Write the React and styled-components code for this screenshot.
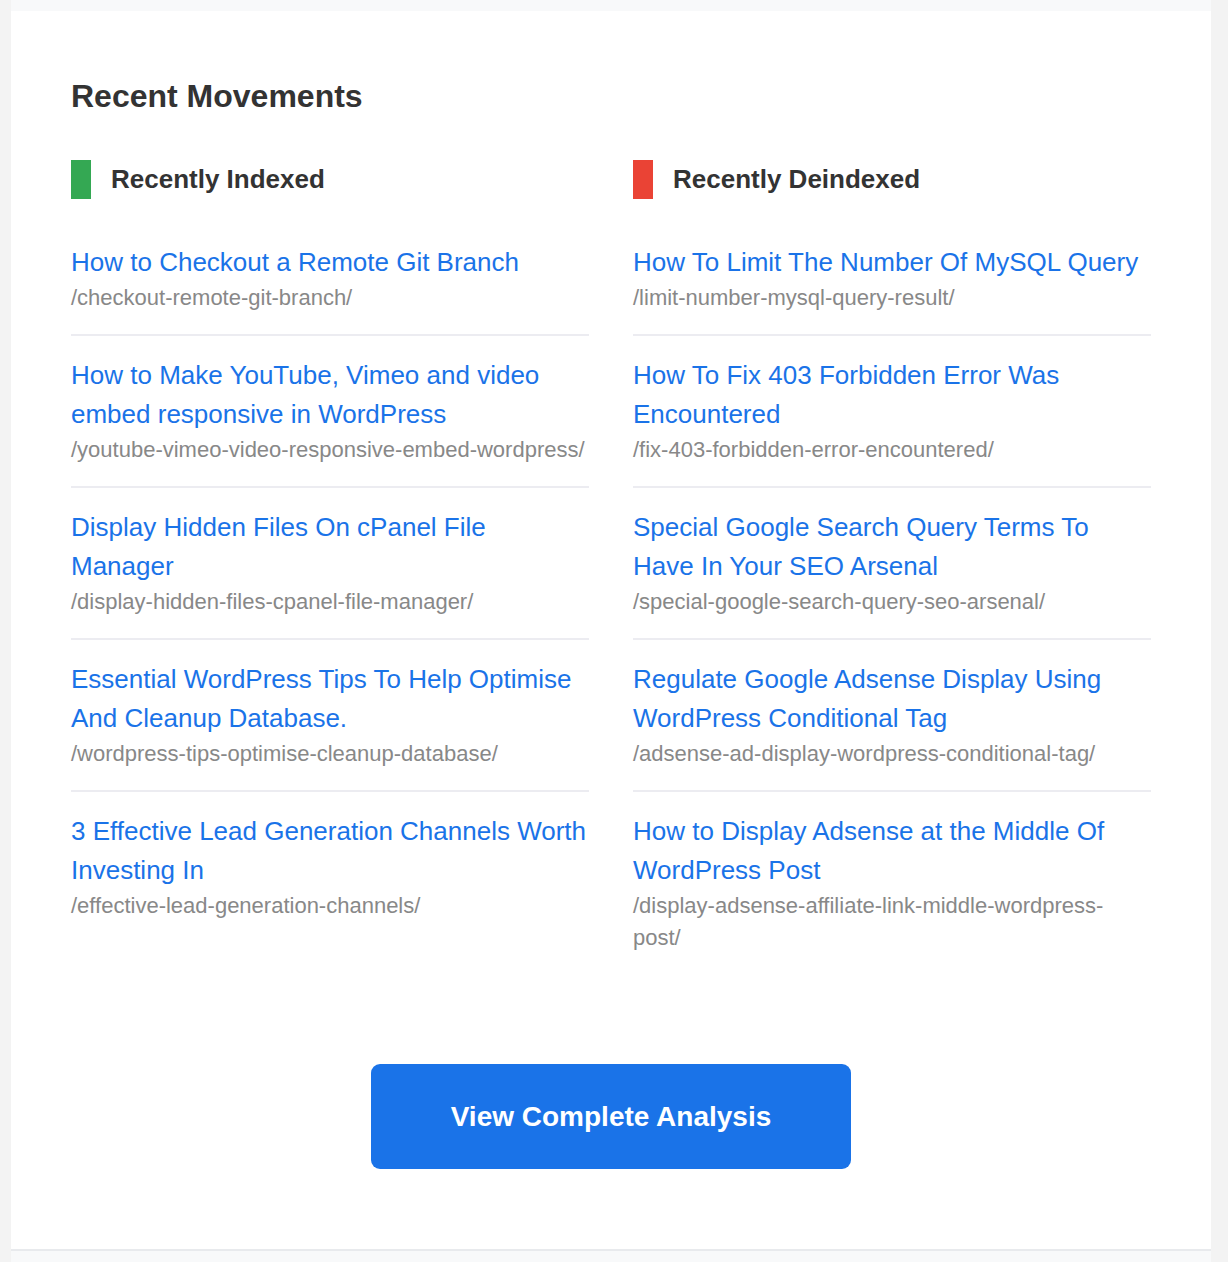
import React from "react";
import styled, { createGlobalStyle } from "styled-components";

const GlobalStyle = createGlobalStyle`
  html, body {
    margin: 0;
    padding: 0;
    background: #f3f3f3;
    font-family: "Liberation Sans", Arial, Helvetica, sans-serif;
  }
  * { box-sizing: border-box; }
`;

const Wrapper = styled.div`
  margin-left: 11px;
  width: 1200px;
  min-height: 100vh;
  background: #f8f9fa;
  padding-top: 11px;
`;

const Card = styled.section`
  background: #ffffff;
  border-bottom: 2px solid #e8eaed;
  padding: 65px 60px 80px;
`;

const Title = styled.h2`
  margin: 0 0 44px;
  font-size: 32px;
  line-height: 40px;
  font-weight: 700;
  color: #333333;
`;

const Columns = styled.div`
  display: grid;
  grid-template-columns: 1fr 1fr;
  column-gap: 44px;
`;

const Column = styled.div`
  display: flex;
  flex-direction: column;
  min-width: 0;
`;

const ColumnHeading = styled.h3`
  margin: 0 0 24px;
  font-size: 26px;
  line-height: 39px;
  font-weight: 700;
  color: #333333;
  border-left: 20px solid ${(p) => p.$accent};
  padding-left: 20px;
`;

const List = styled.ul`
  list-style: none;
  margin: 0;
  padding: 0;
`;

const Item = styled.li`
  padding: 20px 0;
  border-bottom: 2px solid #ececf1;
  &:last-child {
    border-bottom: none;
  }
`;

const PostLink = styled.a`
  display: block;
  font-size: 26px;
  line-height: 39px;
  color: #1a73e8;
  text-decoration: none;
`;

const PostPath = styled.div`
  font-size: 22px;
  line-height: 32px;
  color: #888888;
`;

const ButtonRow = styled.div`
  display: flex;
  justify-content: center;
  margin-top: 90px;
`;

const Button = styled.a`
  display: block;
  width: 480px;
  padding: 31.5px 0;
  background: #1a73e8;
  border-radius: 9px;
  color: #ffffff;
  font-size: 28px;
  line-height: 42px;
  font-weight: 700;
  text-align: center;
  text-decoration: none;
`;

const indexed = [
  ["How to Checkout a Remote Git Branch", "/checkout-remote-git-branch/"],
  [
    "How to Make YouTube, Vimeo and video embed responsive in WordPress",
    "/youtube-vimeo-video-responsive-embed-wordpress/",
  ],
  [
    "Display Hidden Files On cPanel File Manager",
    "/display-hidden-files-cpanel-file-manager/",
  ],
  [
    "Essential WordPress Tips To Help Optimise And Cleanup Database.",
    "/wordpress-tips-optimise-cleanup-database/",
  ],
  [
    "3 Effective Lead Generation Channels Worth Investing In",
    "/effective-lead-generation-channels/",
  ],
];

const deindexed = [
  ["How To Limit The Number Of MySQL Query", "/limit-number-mysql-query-result/"],
  [
    "How To Fix 403 Forbidden Error Was Encountered",
    "/fix-403-forbidden-error-encountered/",
  ],
  [
    "Special Google Search Query Terms To Have In Your SEO Arsenal",
    "/special-google-search-query-seo-arsenal/",
  ],
  [
    "Regulate Google Adsense Display Using WordPress Conditional Tag",
    "/adsense-ad-display-wordpress-conditional-tag/",
  ],
  [
    "How to Display Adsense at the Middle Of WordPress Post",
    "/display-adsense-affiliate-link-middle-wordpress-post/",
  ],
];

function MovementColumn({ title, accent, items }) {
  return (
    <Column>
      <ColumnHeading $accent={accent}>{title}</ColumnHeading>
      <List>
        {items.map(([name, path]) => (
          <Item key={path}>
            <PostLink href="#">{name}</PostLink>
            <PostPath>{path}</PostPath>
          </Item>
        ))}
      </List>
    </Column>
  );
}

export default function App() {
  return (
    <>
      <GlobalStyle />
      <Wrapper>
        <Card>
          <Title>Recent Movements</Title>
          <Columns>
            <MovementColumn title="Recently Indexed" accent="#34a853" items={indexed} />
            <MovementColumn title="Recently Deindexed" accent="#ea4335" items={deindexed} />
          </Columns>
          <ButtonRow>
            <Button href="#">View Complete Analysis</Button>
          </ButtonRow>
        </Card>
      </Wrapper>
    </>
  );
}
